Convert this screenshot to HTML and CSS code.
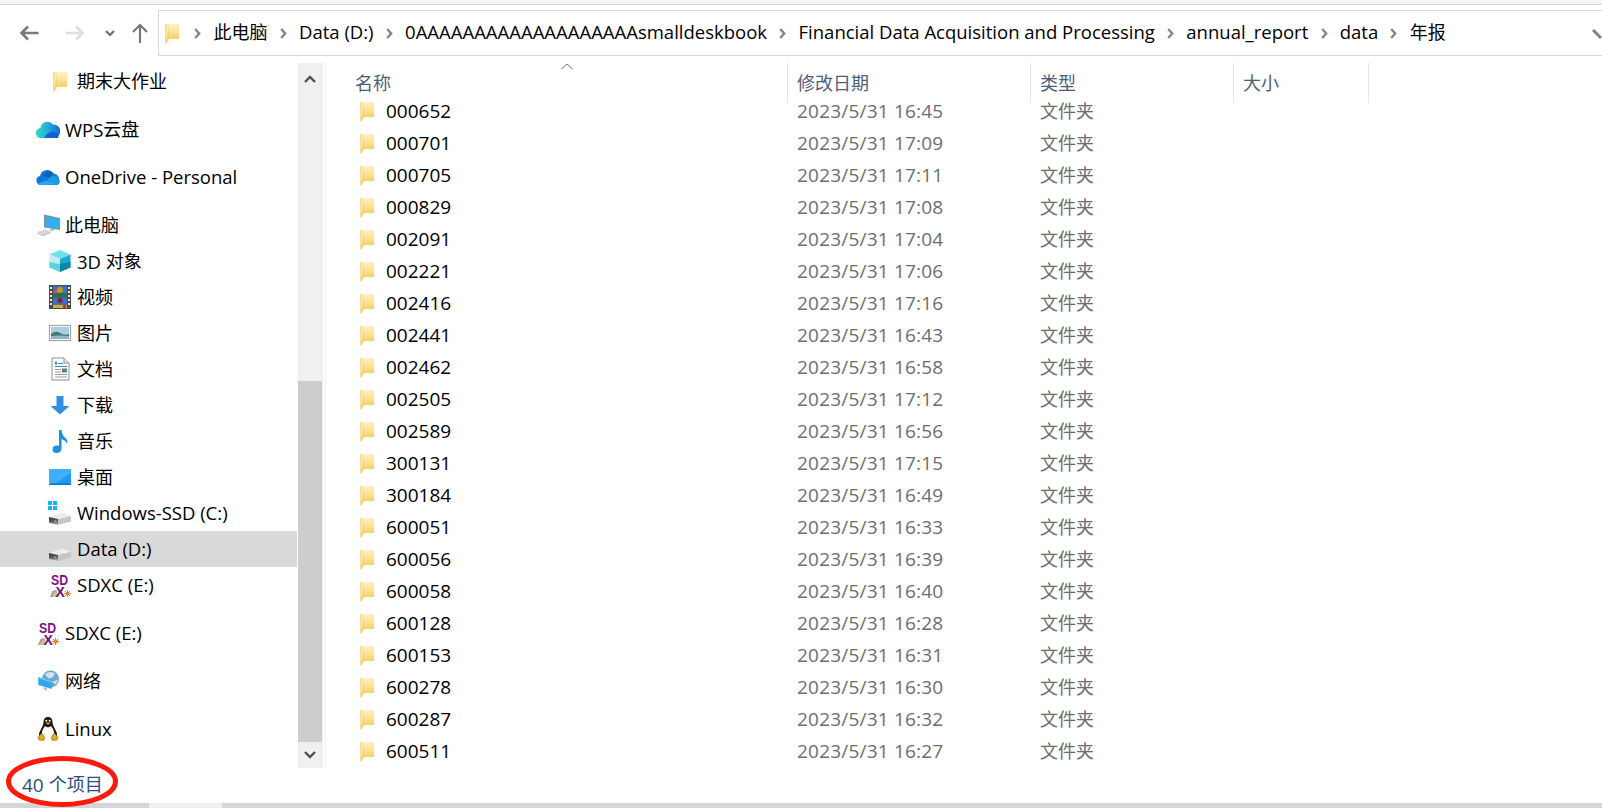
FILE: index.html
```html
<!DOCTYPE html>
<html lang="zh">
<head>
<meta charset="utf-8">
<title>年报</title>
<link rel="stylesheet" href="styles.css">
</head>
<body>
<svg class="defs" aria-hidden="true">
  <defs>
    <linearGradient id="fg" x1="0" y1="0" x2="0" y2="1"><stop offset="0" stop-color="#fff1c4"/><stop offset=".5" stop-color="#fde297"/><stop offset="1" stop-color="#f6cf66"/></linearGradient>
    <linearGradient id="wps" x1="0" y1="0" x2="1" y2="0"><stop offset="0" stop-color="#37dcc0"/><stop offset=".55" stop-color="#1fa6de"/><stop offset="1" stop-color="#1467d8"/></linearGradient>
    <linearGradient id="front" x1="0" y1="0" x2="0" y2="1"><stop offset="0" stop-color="#3f3f3f"/><stop offset=".55" stop-color="#5a5a5a"/><stop offset="1" stop-color="#c9c9c9"/></linearGradient>
    <symbol id="folder" viewBox="0 0 14 21">
      <path d="M0 1h13.500q.5 0 .5.5V16H0z" fill="url(#fg)"/>
      <path d="M0 1h4v15.500L1 20.500H0z" fill="#fbe8a8"/>
      <path d="M4 3.500v13L1 20.500V18.500z" fill="#f5d475"/>
      <path d="M.2 1v19.500" fill="none" stroke="#e9c262" stroke-width=".5"/>
    </symbol>
    <symbol id="drive" viewBox="0 0 24 14">
      <path d="M1 6l14-4.500 8 3.500-13 3z" fill="#ececec"/>
      <path d="M1 6l9 2v6L1 12z" fill="url(#front)"/>
      <path d="M10 8l13-3v5.500L10 14z" fill="#c6c6c6"/>
      <rect x="6" y="9.500" width="2.500" height="1.500" fill="#62d06e"/>
    </symbol>
    <symbol id="sdcard" viewBox="0 0 24 24">
      <text x="3" y="12" class="sd-t" textLength="17" lengthAdjust="spacingAndGlyphs">SD</text>
      <path d="M2 24l2.500-6 4-1 1 7z" fill="#9aa1a8"/>
      <path d="M4 24l2.500-5 2-.5v5.500z" fill="#d8c276"/>
      <text x="7.500" y="24" class="sd-x">X</text>
      <path d="M19.500 17v7M16 20.500h7M17 18l5 5M22 18l-5 5" stroke="#f0782a" stroke-width="1" fill="none"/>
    </symbol>
  </defs>
</svg>

<div class="topstrip"></div>

<header class="toolbar">
  <nav class="navbtns">
    <svg class="nav-back" width="20" height="16" viewBox="0 0 20 16"><path d="M19.500 8H2.500M9 1.500L2.500 8 9 14.500" fill="none" stroke="#787878" stroke-width="2.600"/></svg>
    <svg class="nav-fwd" width="20" height="16" viewBox="0 0 20 16"><path d="M.5 8H17.500M11 1.500L17.500 8 11 14.500" fill="none" stroke="#dedede" stroke-width="2.600"/></svg>
    <svg class="nav-drop" width="10" height="7" viewBox="0 0 10 7"><path d="M1 1l4 4 4-4" fill="none" stroke="#6f6f6f" stroke-width="2.200"/></svg>
    <svg class="nav-up" width="16" height="20" viewBox="0 0 16 20"><path d="M8 20V2.500M1 9L8 2l7 7" fill="none" stroke="#787878" stroke-width="2.200"/></svg>
  </nav>
  <div class="address">
    <svg class="addr-folder" width="14" height="21"><use href="#folder"/></svg>
    <svg class="chev" width="7" height="11" viewBox="0 0 7 11"><path d="M1.200 1l4 4.500-4 4.500" fill="none" stroke="#848484" stroke-width="2.400"/></svg>
    <span class="c">此电脑</span>
    <svg class="chev" width="7" height="11" viewBox="0 0 7 11"><path d="M1.200 1l4 4.500-4 4.500" fill="none" stroke="#848484" stroke-width="2.400"/></svg>
    <span>Data (D:)</span>
    <svg class="chev" width="7" height="11" viewBox="0 0 7 11"><path d="M1.200 1l4 4.500-4 4.500" fill="none" stroke="#848484" stroke-width="2.400"/></svg>
    <span>0AAAAAAAAAAAAAAAAAAAsmalldeskbook</span>
    <svg class="chev" width="7" height="11" viewBox="0 0 7 11"><path d="M1.200 1l4 4.500-4 4.500" fill="none" stroke="#848484" stroke-width="2.400"/></svg>
    <span>Financial Data Acquisition and Processing</span>
    <svg class="chev" width="7" height="11" viewBox="0 0 7 11"><path d="M1.200 1l4 4.500-4 4.500" fill="none" stroke="#848484" stroke-width="2.400"/></svg>
    <span>annual_report</span>
    <svg class="chev" width="7" height="11" viewBox="0 0 7 11"><path d="M1.200 1l4 4.500-4 4.500" fill="none" stroke="#848484" stroke-width="2.400"/></svg>
    <span>data</span>
    <svg class="chev" width="7" height="11" viewBox="0 0 7 11"><path d="M1.200 1l4 4.500-4 4.500" fill="none" stroke="#848484" stroke-width="2.400"/></svg>
    <span class="c">年报</span>
    <svg class="addr-drop" width="10" height="10" viewBox="0 0 10 10"><path d="M1 1l8 8" stroke="#808080" stroke-width="3"/></svg>
  </div>
</header>

<main class="main">
  <aside class="sidebar">
    <ul class="tree">
      <li class="row lv2"><span class="ic"><svg width="14" height="21"><use href="#folder"/></svg></span><span class="c">期末大作业</span></li>
    </ul>
    <ul class="tree">
      <li class="row lv1"><span class="ic"><svg width="24" height="24" viewBox="0 0 24 24"><path d="M5 21a5 5 0 0 1-.5-10A7 7 0 0 1 17 7.500 6.700 6.700 0 0 1 18 21z" fill="url(#wps)"/><path d="M8 21c3-5 7-7 10-6 3 1 5.500 3 4 6z" fill="#1160d4"/></svg></span><span>WPS<span class="c">云盘</span></span></li>
    </ul>
    <ul class="tree">
      <li class="row lv1"><span class="ic"><svg width="24" height="24" viewBox="0 0 24 24"><path d="M5 20a4.500 4.500 0 0 1-1-8.900 7 7 0 0 1 13-2.500 5.500 5.500 0 0 1 6 6 3.500 3.500 0 0 1-2 5.400z" fill="#0f78d4"/><path d="M7 11a6.800 6.800 0 0 1 10.500-3l-4 4.500z" fill="#0a5fae"/><path d="M8 20l5.500-7.500q2.500-2 4.500-1.500 5 0 5 5.500 0 2.500-2.500 3.500z" fill="#1c9ae4"/><path d="M5 20q-2 0-3-1.500l8-3 8 3.500z" fill="#2aa8ef"/></svg></span><span>OneDrive - Personal</span></li>
    </ul>
    <ul class="tree">
      <li class="row lv1"><span class="ic"><svg width="24" height="24" viewBox="0 0 24 24"><path d="M8 1.500l16 3.500v12L8 14.500z" fill="#8a8f96"/><path d="M9 3l14 3v10L9 13.500z" fill="#35aef0"/><path d="M14 15.500l4 .6v2l-4-.5z" fill="#b5b8bc"/><path d="M1 19l8-2.500 6 2-8 3z" fill="#d2d4d7"/><path d="M1 20.500l6 2.500 8-3-1-.8-7 2.500-6-2z" fill="#aeb1b5"/></svg></span><span class="c">此电脑</span></li>
      <li class="row lv2"><span class="ic"><svg width="24" height="24" viewBox="0 0 24 24"><path d="M12 1l10.500 4.500L12 10 1.500 5.500z" fill="#6fe0ea"/><path d="M1.500 5.500L12 10v13L1.500 18.500z" fill="#c3eef1"/><path d="M22.500 5.500L12 10v13l10.500-4.500z" fill="#1ba8c9"/><path d="M12 15l10.500-2v5.500L12 23z" fill="#0b86a8"/><path d="M1.500 13L12 15v8L1.500 18.500z" fill="#5fd2e0"/></svg></span><span>3D <span class="c">对象</span></span></li>
      <li class="row lv2"><span class="ic"><svg width="24" height="24" viewBox="0 0 24 24"><rect x="1" y="0" width="22" height="24" fill="#4a4a4a"/><path d="M2 2h2v2H2zM2 6h2v2H2zM2 10h2v2H2zM2 14h2v2H2zM2 18h2v2H2zM20 2h2v2h-2zM20 6h2v2h-2zM20 10h2v2h-2zM20 14h2v2h-2zM20 18h2v2h-2z" fill="#e6e6e6"/><rect x="5" y="1" width="14" height="10.500" fill="#3f6fc0"/><rect x="5" y="12.500" width="14" height="10.500" fill="#3f6fc0"/><path d="M5 8h14v3.500H5z" fill="#1e7a3c"/><circle cx="12" cy="5" r="3" fill="#c8961e"/><path d="M5 20h14v3H5z" fill="#d9a92e"/><circle cx="12" cy="15.500" r="2.500" fill="#8a2020"/><rect x="6" y="5" width="3" height="3" fill="#d84a6a"/><rect x="15" y="20" width="3" height="3" fill="#b3322a"/></svg></span><span class="c">视频</span></li>
      <li class="row lv2"><span class="ic"><svg width="24" height="24" viewBox="0 0 24 24"><rect x="1.500" y="4.500" width="21" height="15" fill="#fff" stroke="#a9a9a9" stroke-width="1.300"/><rect x="3" y="6" width="18" height="12" fill="#a9cfe6"/><path d="M3 13q5-4 9-1t9 1v5H3z" fill="#3f7a6e"/><path d="M3 15q8-1 18 0v3H3z" fill="#8fb8c6"/></svg></span><span class="c">图片</span></li>
      <li class="row lv2"><span class="ic"><svg width="24" height="24" viewBox="0 0 24 24"><path d="M4 1h12l5 5v17H4z" fill="#fff" stroke="#8e8e8e"/><path d="M16 1v5h5" fill="#e6e6e6" stroke="#8e8e8e"/><path d="M7 4.500h2v3H7zM10 6h5v1h-5zM7 9h12v1H7z" fill="#2f8ed8"/><path d="M7 12h6v1H7zM7 14.500h6v1H7zM7 17h12v1H7zM7 19.500h12v1H7z" fill="#9a9a9a"/><rect x="14" y="11.500" width="5" height="4" fill="#5b7f8f"/></svg></span><span class="c">文档</span></li>
      <li class="row lv2"><span class="ic"><svg width="24" height="24" viewBox="0 0 24 24"><path d="M8.500 3h7v10h6L12 21.500 2.500 13h6z" fill="#2f8fe0"/></svg></span><span class="c">下载</span></li>
      <li class="row lv2"><span class="ic"><svg width="24" height="24" viewBox="0 0 24 24"><path d="M11 1h2.500q.5 5 4 8 2.500 2.500 1.500 6-1-3.500-5.500-5v9.500q0 4-4.500 4.500-4.500 0-4.500-3.500 0-4 5-4 1 0 1.500.4z" fill="#1a94e0"/></svg></span><span class="c">音乐</span></li>
      <li class="row lv2"><span class="ic"><svg width="24" height="24" viewBox="0 0 24 24"><rect x="1" y="4" width="22" height="16" fill="#1e9bf0"/><path d="M1 4h22v4L5 20H1z" fill="#3fb0f8"/><path d="M3 18.500h18" stroke="#0f6fc0" stroke-width=".7"/><rect x="1" y="19" width="22" height="1" fill="#0f7ad0"/></svg></span><span class="c">桌面</span></li>
      <li class="row lv2"><span class="ic ic-drive"><svg class="winflag" width="9" height="9" viewBox="0 0 9 9"><path d="M0 0h4v4H0zM5 0h4v4H5zM0 5h4v4H0zM5 5h4v4H5z" fill="#0fb4f0"/></svg><svg width="24" height="14"><use href="#drive"/></svg></span><span>Windows-SSD (C:)</span></li>
      <li class="row lv2 sel"><span class="ic ic-drive"><svg width="24" height="14"><use href="#drive"/></svg></span><span>Data (D:)</span></li>
      <li class="row lv2"><span class="ic"><svg width="24" height="24"><use href="#sdcard"/></svg></span><span>SDXC (E:)</span></li>
    </ul>
    <ul class="tree">
      <li class="row lv1"><span class="ic"><svg width="24" height="24"><use href="#sdcard"/></svg></span><span>SDXC (E:)</span></li>
    </ul>
    <ul class="tree">
      <li class="row lv1"><span class="ic"><svg width="24" height="24" viewBox="0 0 24 24"><circle cx="14.500" cy="10" r="8.500" fill="#6ba5d0"/><path d="M9 5q5-3.500 10-.5l-2.500 4-4 1zM16 13l6-2.500-2 5z" fill="#cfe3ef"/><path d="M2 8l14 4.500-.5 7.500L2.500 16z" fill="#2ea6ee"/><path d="M2 8l14 4.500v1L2 9z" fill="#8fd2f6"/><path d="M7 18l4 1.200v1.800l3 1-7-1.500 1-.5z" fill="#b9bcc0"/></svg></span><span class="c">网络</span></li>
    </ul>
    <ul class="tree">
      <li class="row lv1"><span class="ic"><svg width="24" height="24" viewBox="0 0 24 24"><path d="M12 0q4.500 0 4.500 5.500 0 2.500 2 5.500 3 4.500 2.500 9H3q-.5-4.500 2.500-9 2-3 2-5.500Q7.500 0 12 0z" fill="#161616"/><path d="M9 9q3 2.500 6 0 4 5 3.500 11.500h-13Q5 14 9 9z" fill="#fff"/><circle cx="10.300" cy="3.800" r="1" fill="#fff"/><circle cx="13.700" cy="3.800" r="1" fill="#fff"/><path d="M9.500 5.500h5L12 8z" fill="#e0a020"/><path d="M2 20l4-4 3 5-1.500 2.500L3 23zM22 20l-4-4-3 5 1.500 2.500L21 23z" fill="#e3a81c" stroke="#7a5a10" stroke-width=".5"/></svg></span><span>Linux</span></li>
    </ul>
  </aside>

  <div class="scrollbar">
    <div class="sb-btn sb-up"><svg width="12" height="8" viewBox="0 0 12 8"><path d="M1 7l5-5 5 5" fill="none" stroke="#505050" stroke-width="2.400"/></svg></div>
    <div class="sb-thumb"></div>
    <div class="sb-btn sb-down"><svg width="12" height="8" viewBox="0 0 12 8"><path d="M1 1l5 5 5-5" fill="none" stroke="#505050" stroke-width="2.400"/></svg></div>
  </div>

  <section class="content">
    <div class="cols head">
      <div class="h h-name"><span class="c">名称</span><svg class="sort" width="12" height="7" viewBox="0 0 12 7"><path d="M.5 6L6 1l5.500 5" fill="none" stroke="#6e6e6e" stroke-width="1"/></svg></div>
      <div class="h"><span class="c">修改日期</span></div>
      <div class="h"><span class="c">类型</span></div>
      <div class="h"><span class="c">大小</span></div>
    </div>
    <div class="cols row-f"><div class="f-name"><svg width="14" height="21"><use href="#folder"/></svg><span>000652</span></div><div class="f-meta">2023/5/31 16:45</div><div class="f-meta t c">文件夹</div></div>
    <div class="cols row-f"><div class="f-name"><svg width="14" height="21"><use href="#folder"/></svg><span>000701</span></div><div class="f-meta">2023/5/31 17:09</div><div class="f-meta t c">文件夹</div></div>
    <div class="cols row-f"><div class="f-name"><svg width="14" height="21"><use href="#folder"/></svg><span>000705</span></div><div class="f-meta">2023/5/31 17:11</div><div class="f-meta t c">文件夹</div></div>
    <div class="cols row-f"><div class="f-name"><svg width="14" height="21"><use href="#folder"/></svg><span>000829</span></div><div class="f-meta">2023/5/31 17:08</div><div class="f-meta t c">文件夹</div></div>
    <div class="cols row-f"><div class="f-name"><svg width="14" height="21"><use href="#folder"/></svg><span>002091</span></div><div class="f-meta">2023/5/31 17:04</div><div class="f-meta t c">文件夹</div></div>
    <div class="cols row-f"><div class="f-name"><svg width="14" height="21"><use href="#folder"/></svg><span>002221</span></div><div class="f-meta">2023/5/31 17:06</div><div class="f-meta t c">文件夹</div></div>
    <div class="cols row-f"><div class="f-name"><svg width="14" height="21"><use href="#folder"/></svg><span>002416</span></div><div class="f-meta">2023/5/31 17:16</div><div class="f-meta t c">文件夹</div></div>
    <div class="cols row-f"><div class="f-name"><svg width="14" height="21"><use href="#folder"/></svg><span>002441</span></div><div class="f-meta">2023/5/31 16:43</div><div class="f-meta t c">文件夹</div></div>
    <div class="cols row-f"><div class="f-name"><svg width="14" height="21"><use href="#folder"/></svg><span>002462</span></div><div class="f-meta">2023/5/31 16:58</div><div class="f-meta t c">文件夹</div></div>
    <div class="cols row-f"><div class="f-name"><svg width="14" height="21"><use href="#folder"/></svg><span>002505</span></div><div class="f-meta">2023/5/31 17:12</div><div class="f-meta t c">文件夹</div></div>
    <div class="cols row-f"><div class="f-name"><svg width="14" height="21"><use href="#folder"/></svg><span>002589</span></div><div class="f-meta">2023/5/31 16:56</div><div class="f-meta t c">文件夹</div></div>
    <div class="cols row-f"><div class="f-name"><svg width="14" height="21"><use href="#folder"/></svg><span>300131</span></div><div class="f-meta">2023/5/31 17:15</div><div class="f-meta t c">文件夹</div></div>
    <div class="cols row-f"><div class="f-name"><svg width="14" height="21"><use href="#folder"/></svg><span>300184</span></div><div class="f-meta">2023/5/31 16:49</div><div class="f-meta t c">文件夹</div></div>
    <div class="cols row-f"><div class="f-name"><svg width="14" height="21"><use href="#folder"/></svg><span>600051</span></div><div class="f-meta">2023/5/31 16:33</div><div class="f-meta t c">文件夹</div></div>
    <div class="cols row-f"><div class="f-name"><svg width="14" height="21"><use href="#folder"/></svg><span>600056</span></div><div class="f-meta">2023/5/31 16:39</div><div class="f-meta t c">文件夹</div></div>
    <div class="cols row-f"><div class="f-name"><svg width="14" height="21"><use href="#folder"/></svg><span>600058</span></div><div class="f-meta">2023/5/31 16:40</div><div class="f-meta t c">文件夹</div></div>
    <div class="cols row-f"><div class="f-name"><svg width="14" height="21"><use href="#folder"/></svg><span>600128</span></div><div class="f-meta">2023/5/31 16:28</div><div class="f-meta t c">文件夹</div></div>
    <div class="cols row-f"><div class="f-name"><svg width="14" height="21"><use href="#folder"/></svg><span>600153</span></div><div class="f-meta">2023/5/31 16:31</div><div class="f-meta t c">文件夹</div></div>
    <div class="cols row-f"><div class="f-name"><svg width="14" height="21"><use href="#folder"/></svg><span>600278</span></div><div class="f-meta">2023/5/31 16:30</div><div class="f-meta t c">文件夹</div></div>
    <div class="cols row-f"><div class="f-name"><svg width="14" height="21"><use href="#folder"/></svg><span>600287</span></div><div class="f-meta">2023/5/31 16:32</div><div class="f-meta t c">文件夹</div></div>
    <div class="cols row-f"><div class="f-name"><svg width="14" height="21"><use href="#folder"/></svg><span>600511</span></div><div class="f-meta">2023/5/31 16:27</div><div class="f-meta t c">文件夹</div></div>
  </section>
</main>

<footer class="status">
  <span class="count">40 <span class="c">个项目</span></span>
  <svg class="ring" width="124" height="54" viewBox="0 0 124 54"><ellipse cx="62" cy="25.500" rx="53.500" ry="23" fill="none" stroke="#fb1a0c" stroke-width="5"/></svg>
</footer>
<div class="hbar"><div class="hbar-thumb"></div></div>
</body>
</html>
```
FILE: styles.css
```css
* { box-sizing: border-box; }
html, body { margin: 0; padding: 0; }
body {
  width: 1602px;
  height: 808px;
  overflow: hidden;
  background: #fff;
  color: #000;
  font-family: "Open Sans", "Noto Sans CJK SC", sans-serif;
  font-size: 18.500px;
  line-height: 24px;
}
.c { font-family: "Noto Sans CJK SC", "Noto Sans", sans-serif; font-size: 18px; vertical-align: 1px; }
ul { list-style: none; margin: 0; padding: 0; }
.defs { display: block; width: 0; height: 0; }
.sd-t { font: 700 14px "Liberation Sans", sans-serif; fill: #7d0f8c; }
.sd-x { font: 700 14px "Liberation Sans", sans-serif; fill: #6d0f80; }

.topstrip { height: 5px; background: #f3f4f6; border-bottom: 1px solid #d8d8d8; }

.toolbar { display: flex; height: 51px; padding-top: 5px; }
.navbtns { width: 158px; flex: none; display: flex; align-items: center; height: 46px; padding-left: 19px; }
.nav-fwd { margin-left: 26px; }
.nav-drop { margin-left: 20px; }
.nav-up { margin-left: 17px; }
.address {
  flex: 1;
  display: flex;
  align-items: center;
  gap: 12.250px;
  height: 46px;
  border: 1px solid #d9d9d9;
  border-right: 0;
  padding: 0 0 2px 6px;
  white-space: nowrap;
  position: relative;
}
.addr-folder { margin: 2px 3px 0 0; }
.chev { margin-top: 2px; }
.addr-drop { position: absolute; right: 0; top: 18px; }

.main { display: flex; height: 712px; padding-top: 7px; }
.sidebar { width: 297px; flex: none; }
.tree { margin-bottom: 12px; }
.row { display: flex; align-items: center; height: 36px; gap: 5px; white-space: nowrap; }
.row > .c, .address > .c, .f-meta.t { margin-top: -2px; }
.lv1 { padding-left: 36px; }
.lv2 { padding-left: 48px; }
.sel { background: #d9d9d9; }
.ic { width: 24px; height: 24px; flex: none; display: flex; align-items: center; justify-content: center; position: relative; }
.ic-drive { align-items: flex-end; }
.winflag { position: absolute; left: 0; top: 0; }

.scrollbar { width: 25px; margin-left: 1px; flex: none; background: #f0f0f0; display: flex; flex-direction: column; height: 705px; }
.sb-btn { display: flex; align-items: center; justify-content: center; width: 24px; }
.sb-up { height: 318px; align-items: flex-start; padding-top: 12px; }
.sb-thumb { width: 24px; height: 361px; background: #cdcdcd; }
.sb-down { height: 26px; }

.content { margin-left: 2px; border-left: 1px solid #f0f0f0; flex: none; width: 1277px; height: 705px; }
.cols { display: grid; grid-template-columns: 462px 243px 203px 135px; }
.head { height: 32px; position: relative; }
.h { position: relative; height: 40px; padding: 7px 0 0 9px; color: #4c607a; border-right: 1px solid #e5e5e5; }
.h-name { padding-left: 29px; }
.sort { position: absolute; left: 235px; top: 0; }
.row-f { height: 32px; align-items: center; color: #6d6d6d; font-size: 19px; }
.f-name { display: flex; align-items: center; gap: 12px; padding-left: 34px; color: #000; }
.f-meta { padding-left: 9px; letter-spacing: .2px; }
.f-meta.t { letter-spacing: 0; }

.status { height: 35px; position: relative; padding: 0 0 3px 22px; display: flex; align-items: center; color: #2b4d7e; font-size: 19px; }
.ring { position: absolute; left: 0; top: -12px; }
.hbar { height: 5px; background: #d6d6da; padding-left: 149px; }
.hbar-thumb { width: 73px; height: 5px; background: #efeff1; }
```
